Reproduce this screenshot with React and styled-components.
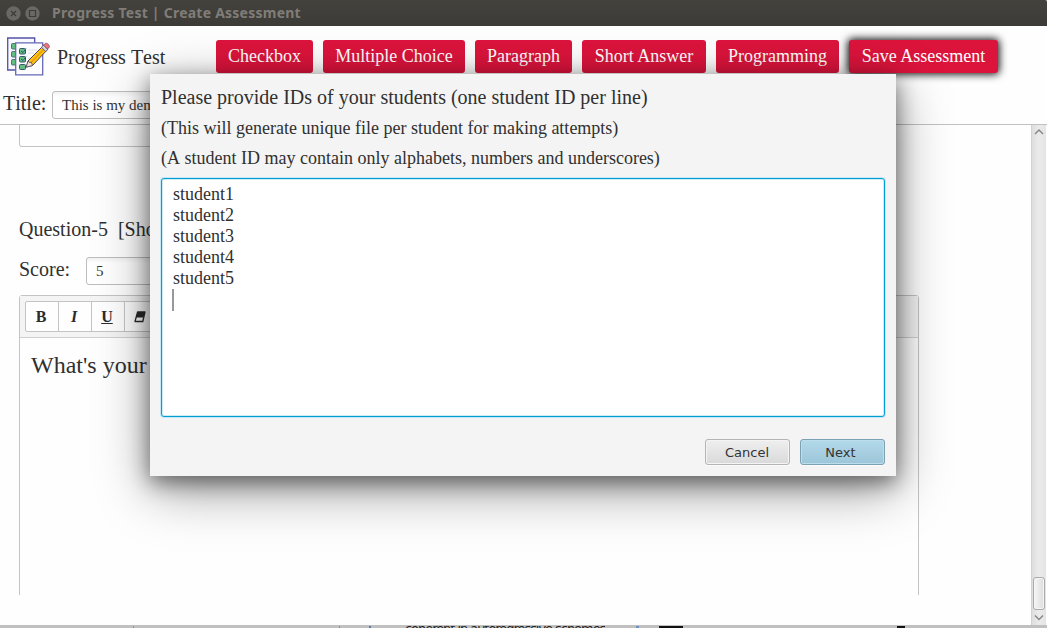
import React from 'react';
import styled, { createGlobalStyle } from 'styled-components';

const Global = createGlobalStyle`
  * { box-sizing: border-box; }
  html, body { margin: 0; padding: 0; }
  body { width: 1047px; height: 628px; overflow: hidden; background: #c0c0c0; font-kerning: none; }
`;

const serif = `'Liberation Serif', 'Times New Roman', serif`;

const Desktop = styled.div`
  position: relative;
  width: 1047px;
  height: 628px;
  overflow: hidden;
  display: flex;
  flex-direction: column;
  font-family: ${serif};
  color: #303030;
`;

const TitleBar = styled.header`
  height: 26px;
  flex: none;
  display: flex;
  align-items: center;
  gap: 4px;
  padding-left: 6px;
  background: linear-gradient(#43423d, #3c3b37);
  border-top-right-radius: 2px;
`;

const WindowButton = styled.span`
  display: flex;
  width: 15px;
  height: 15px;
  svg { display: block; }
`;

const WindowTitle = styled.h1`
  margin: 0 0 0 8px;
  font: bold 14px/24px 'Noto Sans', sans-serif;
  letter-spacing: 0.24px;
  color: #807d78;
  white-space: nowrap;
`;

const Header = styled.section`
  height: 99px;
  flex: none;
  background: #fefefe;
  border-bottom: 1px solid #c0c0c0;
  display: flex;
  flex-direction: column;
`;

const ActionRow = styled.div`
  display: flex;
  padding: 11px 0 0 7px;
  height: 61px;
`;

const Brand = styled.div`
  display: flex;
  width: 209px;
  gap: 7px;
  font-size: 20px;
  line-height: 40px;
  svg { display: block; flex: none; }
`;

const Actions = styled.nav`
  display: flex;
  gap: 10px;
  padding-top: 3px;
  align-items: flex-start;
`;

const ActionButton = styled.button`
  width: ${(p) => p.$width}px;
  height: 33px;
  padding: 0;
  border: 0;
  border-radius: 3px;
  background: #dc143c;
  color: #fff;
  font: 18px/33px ${serif};
  white-space: nowrap;
  box-shadow: ${(p) => (p.$raised ? '0 0 9px 1px #000' : 'none')};
`;

const TitleRow = styled.label`
  display: flex;
  padding: 4px 0 0 3px;
  font-size: 20px;
  line-height: 24px;
`;

const TextInput = styled.input`
  width: ${(p) => p.$width}px;
  height: 28px;
  padding: 0 9px;
  border: 1px solid #bdbdbd;
  border-radius: 3px;
  background: linear-gradient(#f2f2f2, #fff 5px);
  color: #333;
  font: 15px ${serif};
  outline: none;
`;

const TitleText = styled.span`
  width: 49px;
`;

const Body = styled.main`
  height: 500px;
  flex: none;
  display: flex;
  background: #fefefe;
`;

const Content = styled.div`
  flex: 1;
  padding-left: 19px;
  height: 470px;
  overflow: hidden;
`;

const PreviousEditor = styled.div`
  width: 700px;
  height: 22px;
  border: 1px solid #c4c4c4;
  border-top: 0;
  border-radius: 0 0 3px 3px;
`;

const QuestionTitle = styled.h2`
  margin: 70px 0 0;
  font: 20px/24px ${serif};
  white-space: pre;
`;

const ScoreRow = styled.label`
  display: flex;
  margin-top: 16px;
  font-size: 20px;
  line-height: 24px;
  span { width: 67px; }
`;

const Editor = styled.section`
  width: 900px;
  height: 340px;
  margin-top: 10px;
  border: 1px solid #c4c4c4;
  border-radius: 3px;
`;

const Toolbar = styled.div`
  display: flex;
  height: 42px;
  padding: 5px;
  background: #f4f4f4;
  border-bottom: 1px solid #d0d0d0;
`;

const ToolGroup = styled.div`
  display: flex;
  height: 31px;
  border: 1px solid #c4c4c4;
  border-radius: 2px;
  background: #fefefe;
`;

const Tool = styled.button`
  width: 33px;
  height: 29px;
  padding: 0 2px 0 0;
  border: 0;
  border-right: 1px solid #c4c4c4;
  background: none;
  display: flex;
  align-items: center;
  justify-content: center;
  color: #2b2b2b;
  svg { display: block; }
`;

const EditorText = styled.p`
  margin: 13px 11px;
  font-size: 24px;
  line-height: 28px;
`;

const ScrollBar = styled.aside`
  width: 16px;
  display: flex;
  flex-direction: column;
  align-items: center;
  background: linear-gradient(90deg, #dedede, #ebebeb 50%, #e4e4e4);
  border-left: 1px solid #d2d2d2;
  border-right: 1px solid #fefefe;
  svg { display: block; flex: none; }
`;

const ScrollTrack = styled.div`
  flex: 1;
  width: 12px;
  padding-bottom: 1px;
  display: flex;
  align-items: flex-end;
`;

const ScrollThumb = styled.div`
  width: 12px;
  height: 33px;
  border: 1px solid #aaa;
  border-radius: 3px;
  background: linear-gradient(90deg, #f6f6f6, #dcdcdc);
  box-shadow: inset 0 0 0 1px #f5f5f5;
`;

const Backdrop = styled.footer`
  height: 3px;
  flex: none;
  position: relative;
  overflow: hidden;
  background: #c0c0c0;
`;

const BackdropMark = styled.i`
  position: absolute;
  top: 1px;
  height: 2px;
  left: ${(p) => p.$x}px;
  width: ${(p) => p.$w}px;
  background: ${(p) => p.$c};
`;

const BackdropText = styled.span`
  position: absolute;
  left: 405px;
  top: 1px;
  height: 2px;
  overflow: hidden;
  font: 13px/14px 'DejaVu Sans', sans-serif;
  color: #222;
  white-space: nowrap;
  span { display: block; margin-top: -4px; letter-spacing: -1.05px; }
`;

const Dialog = styled.section`
  position: absolute;
  left: 150px;
  top: 74px;
  width: 746px;
  height: 402px;
  padding: 11px 11px 0;
  background: #f4f4f4;
  box-shadow: 0 6px 20px rgba(0, 0, 0, 0.48), 0 14px 50px rgba(0, 0, 0, 0.4);
  display: flex;
  flex-direction: column;
`;

const DialogLine = styled.p`
  margin: 0;
  white-space: nowrap;
  font-size: ${(p) => (p.$lead ? 20 : 18)}px;
  line-height: ${(p) => (p.$lead ? 24 : 21)}px;
  padding-bottom: 9px;
`;

const StudentIds = styled.div`
  height: 239px;
  padding: 5px 11px;
  background: #fff;
  border: 1px solid #039ed3;
  border-radius: 3px;
  box-shadow: 0 0 0 1px #c5e8f5, inset 0 0 0 1px #cdebf6;
  font-size: 18px;
  line-height: 21px;
`;

const Caret = styled.div`
  width: 2px;
  height: 22px;
  margin-left: -1px;
  background: #999;
`;

const DialogActions = styled.div`
  display: flex;
  justify-content: flex-end;
  gap: 10px;
  margin-top: 22px;
`;

const DialogButton = styled.button`
  width: 85px;
  height: 26px;
  padding: 0 ${(p) => (p.$primary ? 4 : 1)}px 0 0;
  border: 1px solid ${(p) => (p.$primary ? '#7ba1b2' : '#b4b4b4')};
  border-radius: 3px;
  background: ${(p) => (p.$primary ? 'linear-gradient(#b3daea, #9cc5d9)' : 'linear-gradient(#efefef, #d9d9d9)')};
  box-shadow: inset 0 0 0 1px ${(p) => (p.$primary ? '#bcdeec' : '#f4f4f4')}, 0 1px 0 #fbfbfb;
  color: #333;
  font: 13px 'DejaVu Sans', sans-serif;
`;

const Logo = () => (
  <svg width="43" height="39" viewBox="0 0 43 39" fill="none">
    <path d="M.7 1h27v32H.7z" fill="#f8f8ff" stroke="#5352a6" strokeWidth="1.3" />
    <g fill="#62bd83" stroke="#38566f" strokeWidth=".8">
      <rect x="4.5" y="6.5" width="6" height="5.5" rx="1" />
      <rect x="4.5" y="14.5" width="6" height="5.5" rx="1" />
      <rect x="4.5" y="22.5" width="6" height="5.5" rx="1" />
    </g>
    <path d="M8.7 5.8h27v32h-27z" fill="#fdfdff" stroke="#6668b4" strokeWidth="1.3" />
    <path d="M21 13h9M21 16h6M21 21h4" stroke="#dfe0ec" />
    <g fill="#62bd83" stroke="#38566f" strokeWidth="1">
      <rect x="12.5" y="11.5" width="6" height="5.5" rx="1" />
      <rect x="12.5" y="19.5" width="6" height="5.5" rx="1" />
      <rect x="12.5" y="27.5" width="6" height="5" rx="1" />
      <path d="m14 14 2 1.6 3-4M14 22l2 1.6 3-4" fill="none" />
    </g>
    <path d="m21 24 15.5-15.5 4 4L25.5 28.5 19.5 30z" fill="#ffc20e" stroke="#4a4460" strokeWidth="1" />
    <path d="m23.5 26 14.5-15" stroke="#e89a12" strokeWidth="1.3" />
    <path d="m21 24-1.8 6.2 6.3-1.7-1-3-2.3-.2z" fill="#f4e3d4" stroke="#4a4460" strokeWidth=".8" />
    <path d="m34.3 10.3 2.3-2.2 4.4 4.2-2.3 2.3z" fill="#cfd2dc" stroke="#4a4460" strokeWidth=".7" />
    <path d="m36.6 8.1 1.6-1.6c1.5-1.4 5.2 2 3.9 3.9l-1.5 1.7z" fill="#ef7378" stroke="#70405c" strokeWidth=".7" />
  </svg>
);

const Arrow = ({ up }) => (
  <svg width="14" height="14" viewBox="0 0 14 14" fill="none">
    <path d={up ? 'M3 9l4-4 4 4' : 'M3 4.5l4 4 4-4'} stroke="#888" strokeWidth="1.5" />
  </svg>
);

const ToolGlyph = styled.span`
  font: ${(p) => (p.$italic ? 'italic ' : '')}bold 16px/16px ${serif};
  text-decoration: ${(p) => (p.$underline ? 'underline' : 'none')};
  text-decoration-thickness: 1px;
  text-underline-offset: 1px;
`;

const actions = [
  ['Checkbox', 97],
  ['Multiple Choice', 142],
  ['Paragraph', 97],
  ['Short Answer', 124],
  ['Programming', 123],
  ['Save Assessment', 149],
];

const students = ['student1', 'student2', 'student3', 'student4', 'student5'];

const marks = [
  [133, 1, '#999'],
  [339, 1, '#8c8c8c'],
  [369, 2, '#5d7ba8'],
  [636, 3, '#6d8fc4'],
  [659, 24, '#111'],
  [897, 8, '#111'],
];

export default function App() {
  return (
    <Desktop>
      <Global />
      <TitleBar>
        <WindowButton>
          <svg width="15" height="15" viewBox="0 0 15 15" fill="none">
            <circle cx="7.5" cy="7.5" r="7.2" fill="#696862" />
            <path d="m5 5 5 5m0-5-5 5" stroke="#3c3b37" strokeWidth="1.1" />
          </svg>
        </WindowButton>
        <WindowButton>
          <svg width="15" height="15" viewBox="0 0 15 15" fill="none">
            <circle cx="7.5" cy="7.5" r="7.2" fill="#696862" />
            <path d="M4.5 4.5h6v6h-6z" stroke="#3c3b37" strokeWidth="1.1" />
          </svg>
        </WindowButton>
        <WindowTitle>Progress Test | Create Assessment</WindowTitle>
      </TitleBar>
      <Header>
        <ActionRow>
          <Brand>
            <Logo />
            Progress Test
          </Brand>
          <Actions>
            {actions.map(([label, width], i) => (
              <ActionButton key={label} $width={width} $raised={i === actions.length - 1}>
                {label}
              </ActionButton>
            ))}
          </Actions>
        </ActionRow>
        <TitleRow>
          <TitleText>Title:</TitleText>
          <TextInput $width={500} defaultValue="This is my demo" />
        </TitleRow>
      </Header>
      <Body>
        <Content>
          <PreviousEditor />
          <QuestionTitle>{'Question-5  [Short Answer]'}</QuestionTitle>
          <ScoreRow>
            <span>Score:</span>
            <TextInput $width={150} defaultValue="5" />
          </ScoreRow>
          <Editor>
            <Toolbar>
              <ToolGroup>
                <Tool><ToolGlyph>B</ToolGlyph></Tool>
                <Tool><ToolGlyph $italic>I</ToolGlyph></Tool>
                <Tool><ToolGlyph $underline>U</ToolGlyph></Tool>
                <Tool>
                  <svg width="12" height="12" viewBox="0 0 12 12">
                    <path d="M3.6 1h7.4L8.8 10.5H1z" fill="#fff" stroke="#2b2b2b" strokeWidth="1.3" strokeLinejoin="round" />
                    <path d="M3.6 1h7.4L9.6 6.6H2z" fill="#2b2b2b" />
                  </svg>
                </Tool>
              </ToolGroup>
            </Toolbar>
            <EditorText>What's your name?</EditorText>
          </Editor>
        </Content>
        <ScrollBar>
          <Arrow up />
          <ScrollTrack><ScrollThumb /></ScrollTrack>
          <Arrow />
        </ScrollBar>
      </Body>
      <Backdrop>
        <BackdropText><span>coherent in autoregressive schemes</span></BackdropText>
        {marks.map(([x, w, c]) => <BackdropMark key={x} $x={x} $w={w} $c={c} />)}
      </Backdrop>
      <Dialog>
        <DialogLine $lead>Please provide IDs of your students (one student ID per line)</DialogLine>
        <DialogLine>(This will generate unique file per student for making attempts)</DialogLine>
        <DialogLine>(A student ID may contain only alphabets, numbers and underscores)</DialogLine>
        <StudentIds>
          {students.map((s) => <div key={s}>{s}</div>)}
          <Caret />
        </StudentIds>
        <DialogActions>
          <DialogButton>Cancel</DialogButton>
          <DialogButton $primary>Next</DialogButton>
        </DialogActions>
      </Dialog>
    </Desktop>
  );
}
